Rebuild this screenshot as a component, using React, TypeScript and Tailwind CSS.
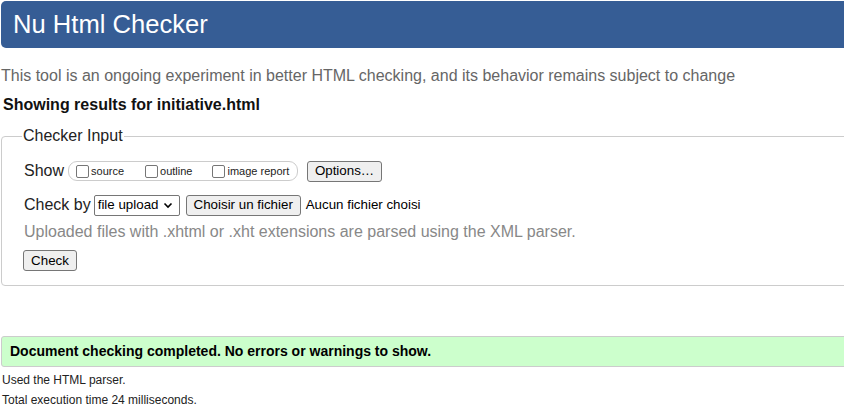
import React from "react";

function Box() {
  return <span className="inline-block w-[13px] h-[13px] border border-[#767676] rounded-[2px] bg-white mr-[2px] shrink-0" />;
}

function Btn({ children, className = "" }: { children: React.ReactNode; className?: string }) {
  return (
    <span
      className={
        "inline-flex items-center justify-center h-[21px] px-[6px] border border-[#767676] rounded-[3px] bg-[#efefef] text-[13.33px] text-black leading-none " +
        className
      }
    >
      {children}
    </span>
  );
}

export default function App() {
  return (
    <div className="w-[844px] h-[415px] overflow-hidden bg-white" style={{ fontFamily: '"Liberation Sans", Arial, sans-serif' }}>
      <div className="w-[1100px]">
        <div className="mt-px ml-px h-[47px] bg-[#365d95] rounded-l-[5px] pl-[12px] pb-[1px] flex items-center text-white text-[25.6px]">
          Nu Html Checker
        </div>
        <p className="mt-[19px] ml-px text-[16px] leading-[18px] text-[#666]">
          This tool is an ongoing experiment in better HTML checking, and its behavior remains subject to change
        </p>
        <p className="mt-[11px] ml-[3px] text-[16px] leading-[18px] font-bold text-[#111]">
          Showing results for initiative.html
        </p>
        <fieldset className="mt-[13px] ml-px border border-[#cccccc] rounded-[4px] pl-[22px] pt-[16px] pb-[13px] text-[#222]">
          <legend className="-ml-[2px] px-px text-[16px] leading-[18px]">Checker Input</legend>
          <div className="flex items-center h-[20px]">
            <span className="text-[16px] mr-[4px]">Show</span>
            <span className="flex items-center h-[20px] w-[230px] border border-[#cccccc] rounded-[9px] pl-[7px] text-[11px]">
              <Box />
              <span className="mr-[21px]">source</span>
              <Box />
              <span className="mr-[20px]">outline</span>
              <Box />
              <span>image report</span>
            </span>
            <Btn className="ml-[9px] w-[75px]">Options…</Btn>
          </div>
          <div className="flex items-center h-[20px] mt-[14px]">
            <span className="text-[16px] mr-[3px]">Check by</span>
            <span className="inline-flex items-center h-[21px] w-[86px] border border-[#767676] rounded-[2px] bg-white pl-[3px] text-[13.33px] text-black">
              file upload
              <svg width="10" height="10" viewBox="0 0 10 10" className="ml-[5px]">
                <path d="M1.5 3.5 L5 7 L8.5 3.5" fill="none" stroke="#000" strokeWidth="1.6" />
              </svg>
            </span>
            <Btn className="ml-[6px] w-[115px]">Choisir un fichier</Btn>
            <span className="ml-[5px] text-[13.33px] text-black">Aucun fichier choisi</span>
          </div>
          <p className="mt-[8px] text-[16px] leading-[18px] text-[#888]">
            Uploaded files with .xhtml or .xht extensions are parsed using the XML parser.
          </p>
          <Btn className="mt-[9px] -ml-px w-[54px]">Check</Btn>
        </fieldset>
        <div className="mt-[50px] ml-px h-[31px] border border-[#cccccc] rounded-l-[3px] bg-[#ccffcc] pl-[8px] flex items-center text-[14px] font-bold text-black">
          Document checking completed. No errors or warnings to show.
        </div>
        <p className="mt-[6px] ml-[2px] text-[12px] leading-[14px] text-[#222]">Used the HTML parser.</p>
        <p className="mt-[6px] ml-[2px] text-[12px] leading-[14px] text-[#222]">Total execution time 24 milliseconds.</p>
      </div>
    </div>
  );
}
